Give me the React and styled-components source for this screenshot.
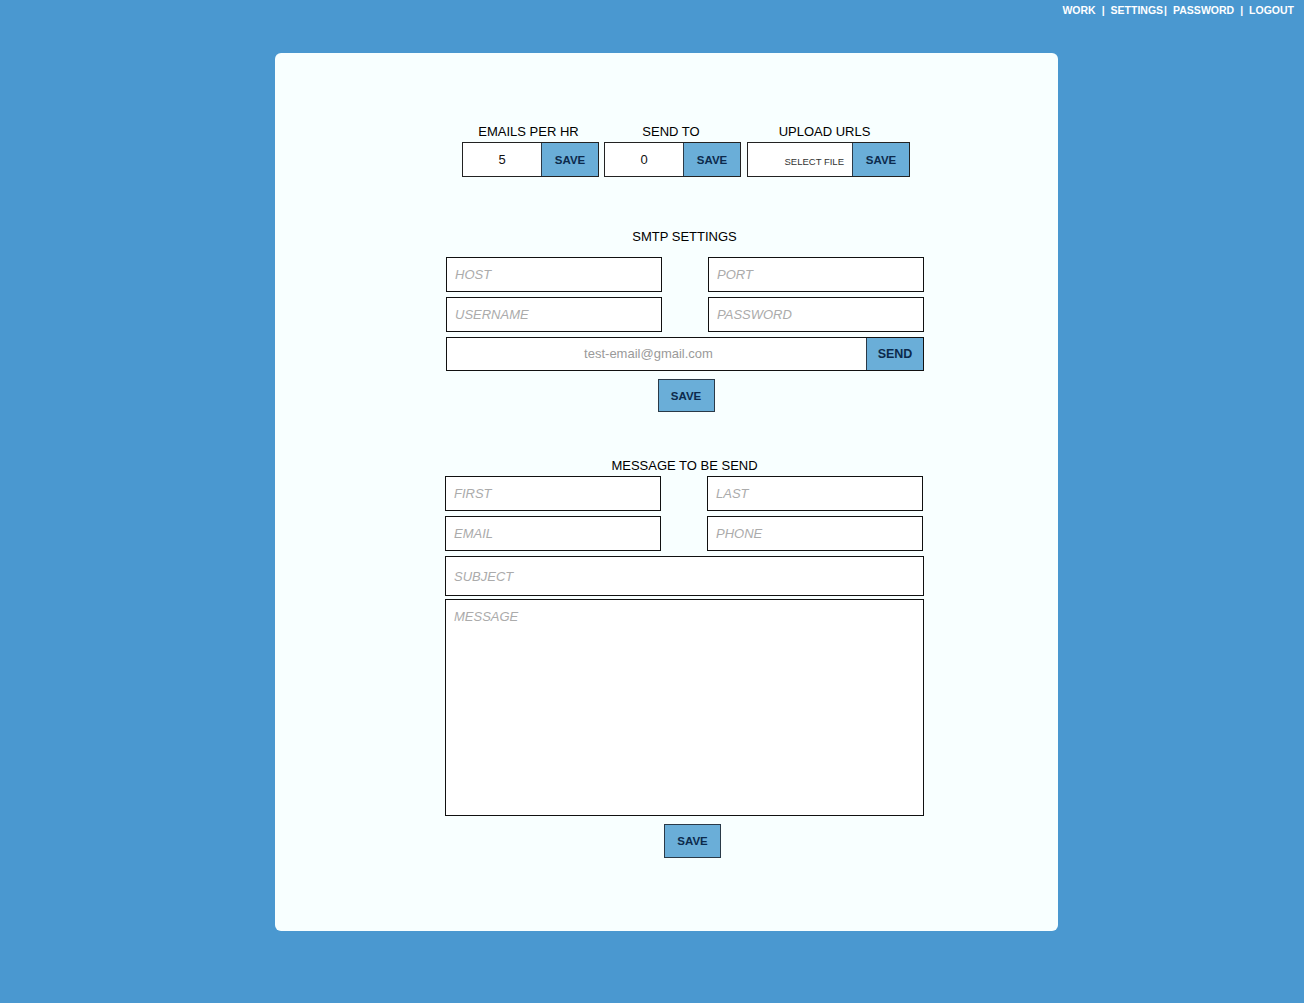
import React from "react";
import styled, { createGlobalStyle } from "styled-components";

const Global = createGlobalStyle`
  html, body { margin: 0; padding: 0; }
  body {
    background: #4a98d0;
    font-family: "Liberation Sans", Arial, sans-serif;
    min-height: 1003px;
  }
  * { box-sizing: border-box; }
`;

const Page = styled.div`
  width: 1304px;
  min-height: 1003px;
  padding-top: 4px;
`;

const Nav = styled.nav`
  display: flex;
  justify-content: flex-end;
  align-items: center;
  gap: 6px;
  padding-right: 10px;
  font-size: 10.5px;
  font-weight: bold;
  color: #fff;
  height: 49px;
  align-items: flex-start;
`;

const NavItem = styled.a`
  color: #fff;
  text-decoration: none;
  white-space: nowrap;
`;

const Sep = styled.span`
  color: #fff;
`;

const Card = styled.main`
  margin-left: 275px;
  width: 783px;
  height: 878px;
  background: #f8ffff;
  border-radius: 6px;
  padding-top: 71px;
  padding-left: 170px;
`;

const Form = styled.div`
  width: 479px;
  display: flex;
  flex-direction: column;
`;

const TopRow = styled.div`
  display: flex;
  margin-left: 17px;
  gap: 5px;
`;

const Group = styled.div`
  display: flex;
  flex-direction: column;
  align-items: center;
  gap: 2px;
  margin-left: ${(p) => p.$ml || 0}px;
`;

const Label = styled.div`
  font-size: 13px;
  line-height: 16px;
  color: #000;
  text-align: center;
  margin-left: ${(p) => p.$shift || 0}px;
`;

const Combo = styled.div`
  display: flex;
  height: 35px;
  border: 1px solid #222;
  background: #fff;
`;

const ValueBox = styled.div`
  width: ${(p) => p.$w}px;
  display: flex;
  align-items: center;
  justify-content: ${(p) => (p.$right ? "flex-end" : "center")};
  padding-right: ${(p) => (p.$right ? "8px" : "0")};
  font-size: ${(p) => (p.$small ? "9.5px" : "13px")};
  color: ${(p) => (p.$small ? "#333" : "#111")};
  padding-top: ${(p) => (p.$small ? "3px" : "0")};
`;

const Button = styled.button`
  width: 57px;
  height: ${(p) => p.$h || 33}px;
  background: #6aaed8;
  border: 1px solid #2a3a48;
  ${(p) => (p.$joined ? "border-width: 0 0 0 1px;" : "")}
  color: #0c2a4c;
  font-family: "Liberation Sans", Arial, sans-serif;
  font-weight: bold;
  font-size: ${(p) => p.$fs || 11.5}px;
  padding: 0;
  cursor: pointer;
  flex-shrink: 0;
`;

const Section = styled.div`
  margin-top: ${(p) => p.$mt}px;
  display: flex;
  flex-direction: column;
  align-items: stretch;
`;

const Grid = styled.div`
  display: grid;
  grid-template-columns: 216px 216px;
  justify-content: space-between;
  row-gap: 5px;
  width: ${(p) => p.$w || 479}px;
  margin-top: ${(p) => p.$mt || 0}px;
  margin-left: ${(p) => p.$ml || 0}px;
`;

const Field = styled.input`
  width: 100%;
  height: ${(p) => p.$h || 35}px;
  border: 1px solid #111;
  background: #fff;
  padding: 0 8px;
  font-family: "Liberation Sans", Arial, sans-serif;
  font-size: 13px;
  font-style: italic;
  outline: none;
  &::placeholder {
    color: #ababab;
  }
`;

const Area = styled.textarea`
  width: 100%;
  height: 217px;
  border: 1px solid #111;
  background: #fff;
  padding: 9px 8px;
  font-family: "Liberation Sans", Arial, sans-serif;
  font-size: 13px;
  font-style: italic;
  resize: none;
  outline: none;
  margin-top: 3px;
  &::placeholder {
    color: #ababab;
  }
`;

const SendRow = styled.div`
  display: flex;
  height: 34px;
  margin-top: 5px;
  border: 1px solid #111;
  background: #fff;
  margin-left: 1px;
`;

const SendInput = styled.input`
  flex: 1;
  border: none;
  background: transparent;
  text-align: center;
  font-family: "Liberation Sans", Arial, sans-serif;
  font-size: 13px;
  outline: none;
  padding-right: 18px;
  padding-bottom: 2px;
  &::placeholder {
    color: #9a9a9a;
  }
`;

const Center = styled.div`
  display: flex;
  justify-content: center;
  margin-top: ${(p) => p.$mt}px;
  margin-left: ${(p) => p.$ml || 0}px;
`;

const Stack = styled.div`
  display: flex;
  flex-direction: column;
  gap: ${(p) => p.$gap || 0}px;
  margin-top: ${(p) => p.$mt || 0}px;
`;

export default function App() {
  return (
    <>
      <Global />
      <Page>
        <Nav>
          <NavItem href="#">WORK</NavItem>
          <Sep>|</Sep>
          <NavItem href="#">SETTINGS</NavItem>
          <Sep style={{ marginLeft: -5 }}>|</Sep>
          <NavItem href="#">PASSWORD</NavItem>
          <Sep>|</Sep>
          <NavItem href="#">LOGOUT</NavItem>
        </Nav>
        <Card>
          <Form>
            <TopRow>
              <Group>
                <Label $shift={-4}>EMAILS PER HR</Label>
                <Combo>
                  <ValueBox $w={78}>5</ValueBox>
                  <Button $joined $h={33}>SAVE</Button>
                </Combo>
              </Group>
              <Group>
                <Label $shift={-3}>SEND TO</Label>
                <Combo>
                  <ValueBox $w={78}>0</ValueBox>
                  <Button $joined $h={33}>SAVE</Button>
                </Combo>
              </Group>
              <Group $ml={1}>
                <Label $shift={-8}>UPLOAD URLS</Label>
                <Combo>
                  <ValueBox $w={104} $right $small>SELECT FILE</ValueBox>
                  <Button $joined $h={33}>SAVE</Button>
                </Combo>
              </Group>
            </TopRow>

            <Section $mt={52}>
              <Label>SMTP SETTINGS</Label>
              <Grid $mt={12} $ml={1} $w={478}>
                <Field placeholder="HOST" />
                <Field placeholder="PORT" />
                <Field placeholder="USERNAME" />
                <Field placeholder="PASSWORD" />
              </Grid>
              <SendRow>
                <SendInput placeholder="test-email@gmail.com" />
                <Button $joined $h={32} $fs={12.5}>SEND</Button>
              </SendRow>
              <Center $mt={8} $ml={3}>
                <Button>SAVE</Button>
              </Center>
            </Section>

            <Section $mt={46}>
              <Label>MESSAGE TO BE SEND</Label>
              <Stack $mt={2} $gap={5}>
                <Grid $w={478}>
                  <Field placeholder="FIRST" />
                  <Field placeholder="LAST" />
                  <Field placeholder="EMAIL" />
                  <Field placeholder="PHONE" />
                </Grid>
                <Field placeholder="SUBJECT" $h={40} />
              </Stack>
              <Area placeholder="MESSAGE" />
              <Center $mt={8} $ml={16}>
                <Button $h={34}>SAVE</Button>
              </Center>
            </Section>
          </Form>
        </Card>
      </Page>
    </>
  );
}
